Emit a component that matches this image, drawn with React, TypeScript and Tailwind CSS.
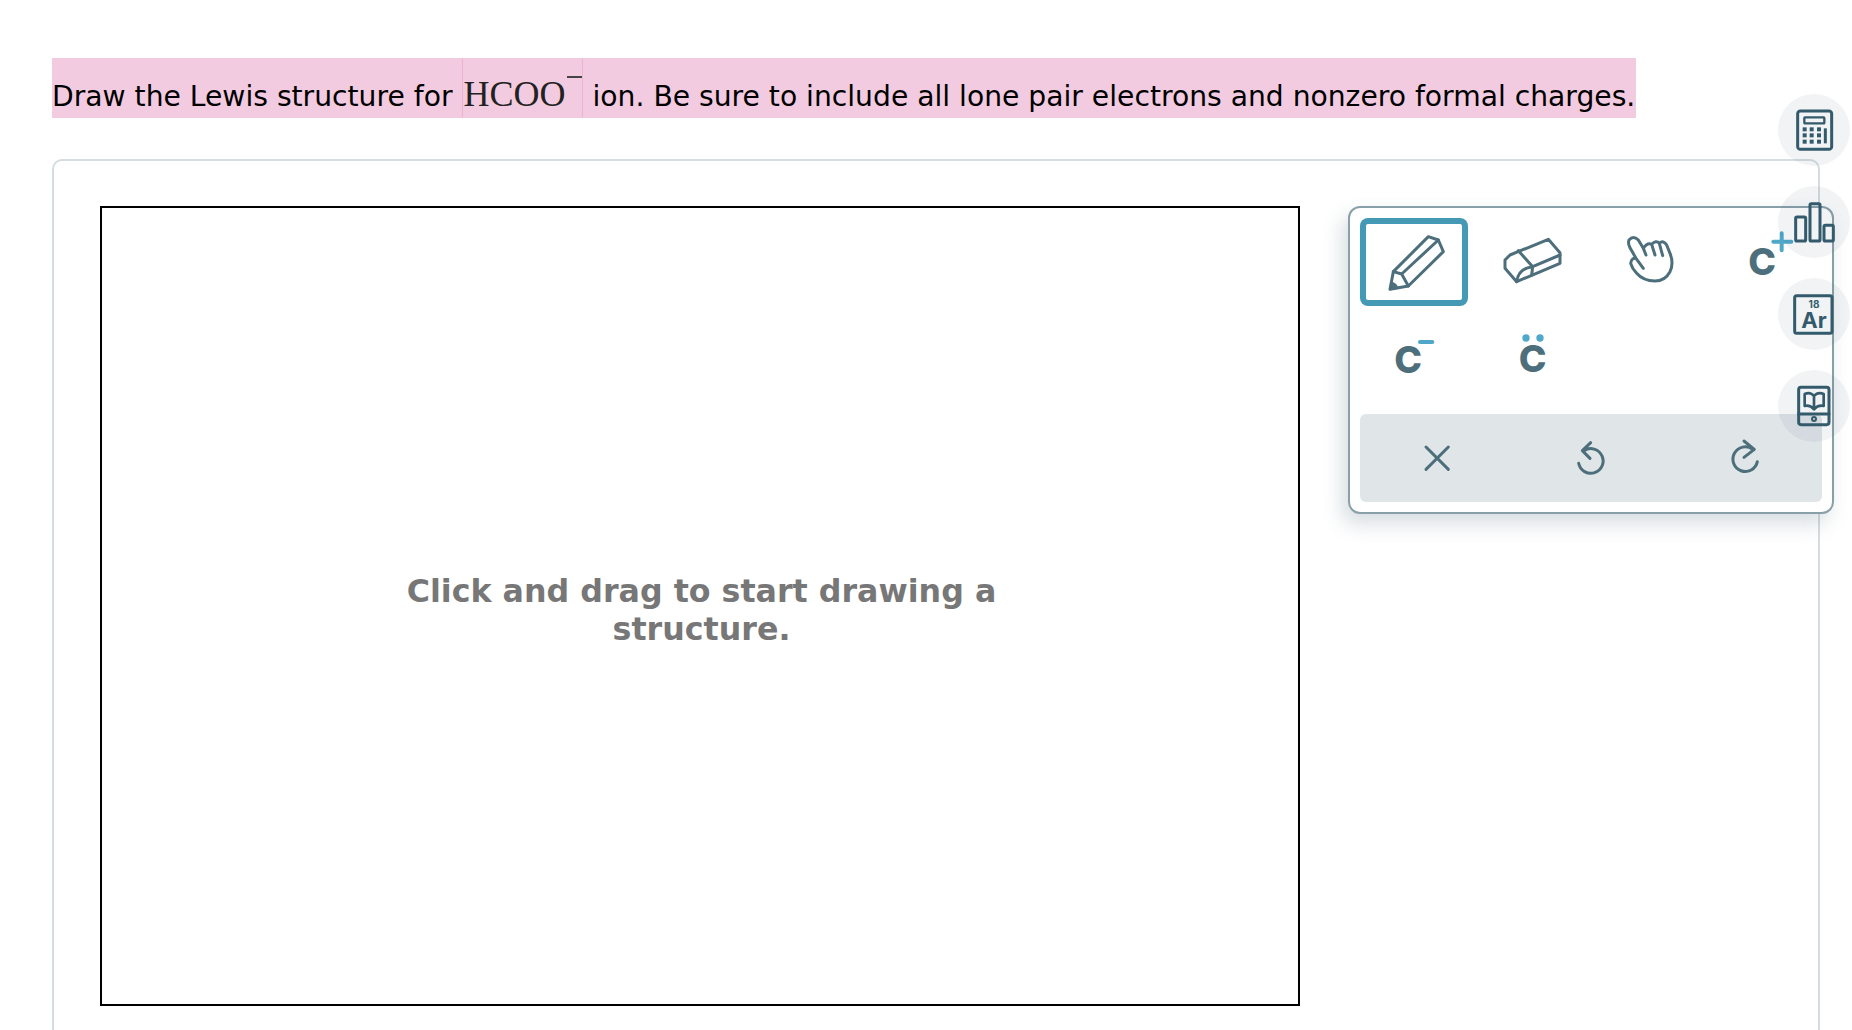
// Lewis structure drawing question

const SLATE = '#4d6f7c'
const BLUE = '#4fa8c8'
const NAVY = '#335b6c'

// ── Tool icons, in 3x pixel units so they can be traced off the reference ─────

const Glyph = ({ x, y, size = 112 }: { x: number; y: number; size?: number }) => (
  <text x={x} y={y} fontFamily="Inter, sans-serif" fontWeight={800} fontSize={size} fill={SLATE} stroke="none">
    C
  </text>
)

const ToolSvg = ({ box, children }: { box: string; children: React.ReactNode }) => (
  <svg
    viewBox={box}
    className="h-[88px] w-[108px] overflow-visible"
    fill="none"
    stroke={SLATE}
    strokeWidth={9}
    strokeLinecap="round"
    strokeLinejoin="round"
  >
    {children}
  </svg>
)

const Pencil = () => (
  <ToolSvg box="60 54 324 264">
    <path d="M160 215 L265 110 L295 120 L310 155 L205 258 L150 268 Z" />
    <path d="M160 215 L185 222 L205 258 M185 222 L295 120" />
    <path d="M150 268 L154 248 Q168 250 172 264 Z" fill={SLATE} strokeWidth={6} />
  </ToolSvg>
)

const Eraser = () => (
  <ToolSvg box="414 54 324 264">
    <path d="M495 180 L510 165 L625 118 L660 158 L660 190 L530 245 L495 205 Z" />
    <path d="M535 152 L578 200 L660 165 M578 200 L575 225 M530 245 Q535 205 578 200" />
  </ToolSvg>
)

const Hand = () => (
  <ToolSvg box="-42 9 324 264">
    <path d="M100 160 L78 130 Q64 128 62 145 Q66 160 80 175 Q100 198 135 198 Q165 198 180 170 Q192 145 180 115 L170 90 Q160 74 148 85 L158 122 M148 85 Q138 74 125 88 L135 120 M125 88 Q112 82 100 100 L108 120 M100 100 L85 75 Q70 60 57 75 Q53 85 60 98 L78 130" />
  </ToolSvg>
)

const CPlus = () => (
  <ToolSvg box="312 9 324 264">
    <Glyph x={415} y={181} />
    <path d="M490 80 H544 M515 55 V106" stroke={BLUE} strokeWidth={12} />
  </ToolSvg>
)

const CMinus = () => (
  <ToolSvg box="60 342 324 264">
    <Glyph x={163} y={519} />
    <path d="M240 426 H277" stroke={BLUE} strokeWidth={12} />
  </ToolSvg>
)

const CPairs = () => (
  <ToolSvg box="414 342 324 264">
    <Glyph x={536} y={515} />
    <circle cx={558} cy={414} r={11} fill={BLUE} stroke="none" />
    <circle cx={600} cy={414} r={11} fill={BLUE} stroke="none" />
  </ToolSvg>
)

const ActionSvg = ({ box, children }: { box: string; children: React.ReactNode }) => (
  <svg
    viewBox={box}
    className="h-[88px] w-[154px]"
    fill="none"
    stroke={SLATE}
    strokeWidth={9}
    strokeLinecap="round"
    strokeLinejoin="round"
  >
    {children}
  </svg>
)

// ── Side rail ─────────────────────────────────────────────────────────────────

const RailButton = ({ box, children }: { box: string; children: React.ReactNode }) => (
  <div className="h-[72px] w-[72px] rounded-full bg-[#335b6c]/[0.07]">
    <svg viewBox={box} className="h-full w-full" fill="none" stroke={NAVY} strokeWidth={9} strokeLinejoin="round" strokeLinecap="round">
      {children}
    </svg>
  </div>
)

const calcKeys = [612, 633, 655].flatMap(x => [148, 166, 185].map(y => ({ x, y })))

const SideRail = () => (
  <div className="absolute left-[1778px] top-[94px] flex flex-col gap-[20px]">
    <RailButton box="532 42 216 216">
      <rect x={591} y={93} width={102} height={115} rx={8} />
      <rect x={611} y={112} width={60} height={18} rx={2} strokeWidth={7} />
      {calcKeys.map(k => (
        <rect key={`${k.x}-${k.y}`} x={k.x - 6} y={k.y - 6} width={12} height={12} fill={NAVY} stroke="none" />
      ))}
      <path d="M674 145 V190" strokeWidth={9} strokeLinecap="butt" />
    </RailButton>
    <RailButton box="532 317 216 216">
      <rect x={585} y={410} width={30} height={72} rx={4} />
      <rect x={628} y={370} width={30} height={112} rx={4} />
      <rect x={670} y={435} width={28} height={47} rx={4} />
    </RailButton>
    <RailButton box="55 22 216 216">
      <rect x={105} y={75} width={112} height={113} rx={6} />
      <text x={163} y={113} textAnchor="middle" fontFamily="Inter, sans-serif" fontWeight={700} fontSize={30} fill={NAVY} stroke="none">18</text>
      <text x={163} y={173} textAnchor="middle" fontFamily="Inter, sans-serif" fontWeight={700} fontSize={66} fill={NAVY} stroke="none">Ar</text>
    </RailButton>
    <RailButton box="55 300 216 216">
      <rect x={117} y={352} width={91} height={112} rx={7} />
      <path d="M117 432 H208" />
      <circle cx={163} cy={447} r={6} strokeWidth={6} />
      <path d="M135 372 Q152 364 163 378 Q175 364 192 372 V408 Q175 404 163 418 Q151 404 135 408 Z M163 378 V418" strokeWidth={8} />
    </RailButton>
  </div>
)

export default function App() {
  return (
    <div className="relative h-screen overflow-hidden bg-white pl-[52px] pt-[58px]">
      {/* Question */}
      <div className="flex h-[60px] w-[1584px] items-stretch whitespace-nowrap bg-[#f3cbe0] font-['DejaVu_Sans',sans-serif] text-[28.2px] leading-[60px] text-black">
        <span className="pt-[9px]">Draw the Lewis structure for</span>
        <span className="relative ml-[9px] w-[121px] border-x border-[#eeb4d4] pl-px pt-[6px] font-['Liberation_Serif',serif] text-[36px] text-[#222]">
          HCOO
          <span className="absolute left-[104px] top-[18px] h-[2px] w-[15px] bg-[#444]" />
        </span>
        <span className="ml-[10px] pt-[9px]">ion. Be sure to include all lone pair electrons and nonzero formal charges.</span>
      </div>

      {/* Card */}
      <div className="mt-[41px] flex h-[1000px] w-[1768px] items-start gap-[48px] rounded-[10px] border-2 border-[#d5dde0] pl-[46px] pt-[45px]">
        <div className="flex h-[800px] w-[1200px] shrink-0 items-center justify-center border-2 border-black pl-[3px] pt-[7px]">
          <p className="max-w-[620px] text-center font-['DejaVu_Sans',sans-serif] text-[31.7px] font-bold leading-[38px] text-[#777]">
            Click and drag to start drawing a structure.
          </p>
        </div>

        {/* Tools */}
        <div className="w-[486px] shrink-0 rounded-[12px] border-2 border-[#8aa0a8] bg-white p-[10px] shadow-[-6px_10px_20px_rgba(60,90,105,0.2)]">
          <div className="grid grid-cols-[repeat(4,108px)] gap-x-[10px] gap-y-[8px]">
            <div className="rounded-[8px] ring-[6px] ring-inset ring-[#4499b5]"><Pencil /></div>
            <Eraser />
            <Hand />
            <CPlus />
            <CMinus />
            <CPairs />
          </div>
          <div className="mt-[12px] flex h-[88px] w-[462px] rounded-[6px] bg-[#e0e5e8]">
            <ActionSvg box="60 102 462 264">
              <path d="M258 201 L325 268 M325 201 L258 268" />
            </ActionSvg>
            <ActionSvg box="522 102 462 264">
              <path d="M732 212 A37 37 0 1 1 716 250 M752 188 L727 212 L750 235" />
            </ActionSvg>
            <ActionSvg box="984 102 462 264">
              <path d="M1238 208 A37 37 0 1 0 1252 245 M1212 183 L1243 208 L1212 232" />
            </ActionSvg>
          </div>
        </div>
      </div>

      <SideRail />
    </div>
  )
}
